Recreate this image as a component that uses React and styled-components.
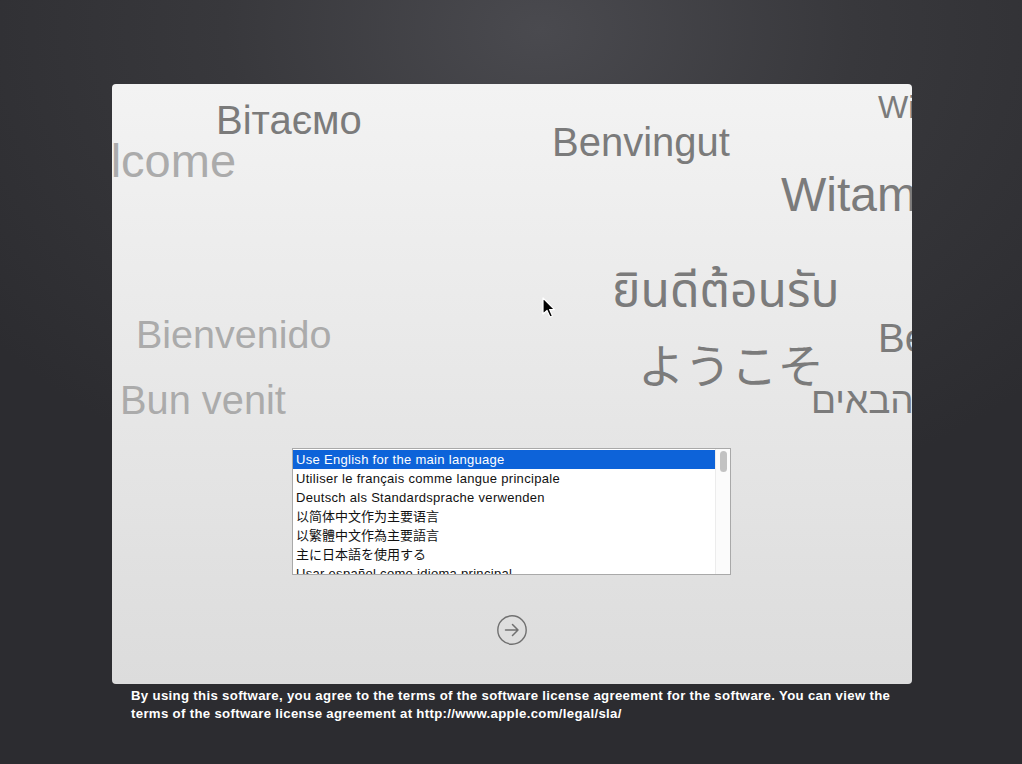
import React from 'react';
import styled, { createGlobalStyle } from 'styled-components';

const Global = createGlobalStyle`
  html, body {
    margin: 0;
    padding: 0;
  }
  body {
    width: 1022px;
    height: 764px;
    overflow: hidden;
    background: radial-gradient(ellipse 700px 500px at 540px 30px, #4a4a4f 0%, #38383c 45%, #2c2c30 100%);
    font-family: 'Liberation Sans', Arial, sans-serif;
  }
`;

const Screen = styled.div`
  display: flex;
  flex-direction: column;
  align-items: center;
  padding: 84px 0 0 2px;
`;

const Panel = styled.div`
  position: relative;
  width: 800px;
  height: 600px;
  border-radius: 4px;
  overflow: hidden;
  background: linear-gradient(#f3f3f3, #dcdcdc);
  display: flex;
  flex-direction: column;
  align-items: center;
`;

const Word = styled.span`
  position: absolute;
  left: ${(p) => p.x}px;
  top: ${(p) => p.y}px;
  font-size: ${(p) => p.size}px;
  line-height: 1;
  white-space: nowrap;
  color: ${(p) => (p.light ? '#ababab' : '#7b7b7b')};
  font-family: ${(p) => p.font || "'Liberation Sans', Arial, sans-serif"};
`;

const List = styled.div`
  position: relative;
  margin: 364px 1px 0 0;
  width: 437px;
  height: 125px;
  border: 1px solid #a9a9a9;
  background: #fff;
  display: flex;
  overflow: hidden;
`;

const Rows = styled.div`
  flex: 1;
  padding-top: 1px;
`;

const Row = styled.div`
  height: 19px;
  line-height: 19px;
  padding-left: 3px;
  font-size: 13px;
  letter-spacing: ${(p) => (p.cjk ? 0 : 0.3)}px;
  white-space: nowrap;
  font-family: 'Liberation Sans', 'Noto Sans CJK SC', sans-serif;
  color: ${(p) => (p.selected ? '#fff' : '#111')};
  background: ${(p) => (p.selected ? '#0d63d9' : 'transparent')};
`;

const Track = styled.div`
  width: 14px;
  border-left: 1px solid #ececec;
  background: #fbfbfb;
  display: flex;
  justify-content: center;
  padding-top: 2px;
`;

const Thumb = styled.div`
  width: 7px;
  height: 21px;
  border-radius: 4px;
  background: #c2c2c2;
`;

const NextButton = styled.button`
  margin-top: 39px;
  width: 32px;
  height: 32px;
  padding: 0;
  border: none;
  background: none;
  display: flex;
  align-items: center;
  justify-content: center;
`;

const Cursor = styled.svg`
  position: absolute;
  left: 430px;
  top: 213px;
`;

const Legal = styled.p`
  box-sizing: border-box;
  width: 800px;
  margin: 3px 0 0;
  padding: 0 10px 0 19px;
  color: #fff;
  font-weight: bold;
  font-size: 13.2px;
  line-height: 18px;
  letter-spacing: 0.33px;
  font-family: 'Liberation Sans', Arial, sans-serif;
`;

const words = [
  { t: 'Wi', x: 766, y: 7, size: 32 },
  { t: 'Вітаємо', x: 104, y: 16, size: 40 },
  { t: 'Welcome', x: -71, y: 53, size: 47, light: true },
  { t: 'Benvingut', x: 440, y: 38, size: 40 },
  { t: 'Witam', x: 669, y: 87, size: 48 },
  { t: 'ยินดีต้อนรับ', x: 500, y: 185, size: 48, font: "'Noto Sans Thai', 'Noto Sans', 'DejaVu Sans', sans-serif" },
  { t: 'Bienvenido', x: 24, y: 231, size: 39.5, light: true },
  { t: 'Be', x: 766, y: 234, size: 40 },
  { t: 'ようこそ', x: 526, y: 256, size: 46.5, font: "'Noto Sans CJK JP', sans-serif" },
  { t: 'Bun venit', x: 8, y: 297, size: 39.8, light: true },
  { t: 'ברוכים הבאים', x: 699, y: 298, size: 37, dir: 'rtl' },
];

const languages = [
  { t: 'Use English for the main language' },
  { t: 'Utiliser le français comme langue principale' },
  { t: 'Deutsch als Standardsprache verwenden' },
  { t: '以简体中文作为主要语言', cjk: true },
  { t: '以繁體中文作為主要語言', cjk: true },
  { t: '主に日本語を使用する', cjk: true },
  { t: 'Usar español como idioma principal' },
];

export default function App() {
  return (
    <>
      <Global />
      <Screen>
        <Panel>
          {words.map((w) => (
            <Word key={w.t} x={w.x} y={w.y} size={w.size} light={w.light} font={w.font} dir={w.dir}>
              {w.t}
            </Word>
          ))}
          <Cursor width="14" height="22" viewBox="0 0 14 22">
            <path d="M1 1 L1 17 L5 13.5 L8 20 L10.5 19 L7.6 12.6 L12.5 12.6 Z" fill="#000" stroke="#fff" strokeWidth="1.2" strokeLinejoin="round" />
          </Cursor>
          <List>
            <Rows>
              {languages.map((l, i) => (
                <Row key={l.t} selected={i === 0} cjk={l.cjk}>{l.t}</Row>
              ))}
            </Rows>
            <Track>
              <Thumb />
            </Track>
          </List>
          <NextButton>
            <svg width="32" height="32" viewBox="0 0 32 32">
              <circle cx="16" cy="16" r="14.2" fill="none" stroke="#707070" strokeWidth="1.4" />
              <path d="M9.5 16 H22 M16.5 10.5 L22 16 L16.5 21.5" fill="none" stroke="#707070" strokeWidth="1.5" strokeLinecap="round" strokeLinejoin="round" />
            </svg>
          </NextButton>
        </Panel>
        <Legal>
          By using this software, you agree to the terms of the software license agreement for the software. You can view the terms of the software license agreement at http://www.apple.com/legal/sla/
        </Legal>
      </Screen>
    </>
  );
}
